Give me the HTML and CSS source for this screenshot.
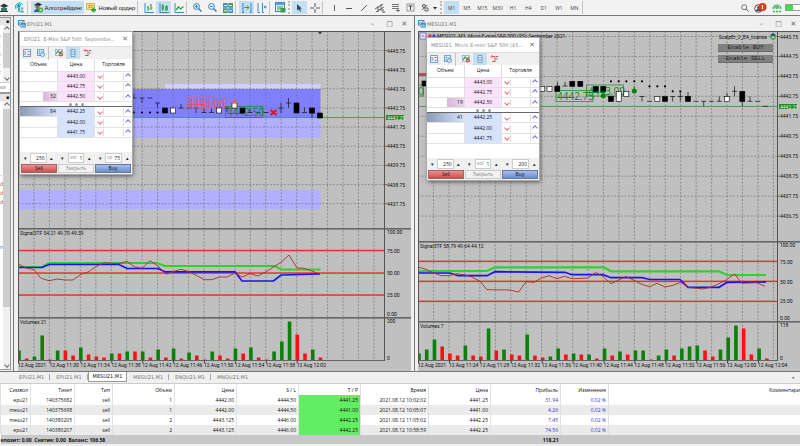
FILE: index.html
```html
<!DOCTYPE html>
<html lang="ru">
<head>
<meta charset="utf-8">
<title>Торговый терминал</title>
<link rel="stylesheet" href="styles.css">
</head>
<body>
<svg class="defs" aria-hidden="true">
  <symbol id="i-doc" viewBox="0 0 8 8"><rect x=".5" y=".5" width="5.5" height="4.5" fill="#fff" stroke="#3390dd"/><rect x="2.5" y="3" width="5.5" height="4.5" fill="#2f93e0"/><path d="M1 4l1.500-2 1.500 1 1.500-2" stroke="#e08030" fill="none"/><path d="M3.500 6.500V5M5.200 6.500V4.500M6.800 6.500V5" stroke="#fff" stroke-width=".8"/></symbol>
  <symbol id="i-depth" viewBox="0 0 8 8"><rect x=".5" y=".5" width="7" height="7" fill="#f4faff" stroke="#69a8dc"/><path d="M1.500 4h2M4.500 2.500h2M4.500 5.500h2" stroke="#e04848" stroke-width="1"/><path d="M1.500 2.500h1M1.500 5.500h1" stroke="#3380cc"/></symbol>
  <symbol id="i-clock" viewBox="0 0 8 8"><rect x=".5" y=".5" width="6" height="6" fill="#eaf4ff" stroke="#69a8dc"/><path d="M.5 2.500h6M2.500.5v6M.5 4.500h3" stroke="#69a8dc" stroke-width=".6"/><circle cx="5.500" cy="5.500" r="2" fill="#fff" stroke="#3380cc" stroke-width=".8"/><path d="M5.500 4.500v1h1" stroke="#3380cc" stroke-width=".6" fill="none"/></symbol>
  <symbol id="i-tick" viewBox="0 0 8 8"><rect x=".5" y=".5" width="7" height="6" fill="#eef7ff" stroke="#7db4e0" stroke-width=".8"/><path d="M1 5l2-3 2 2 2-2" stroke="#3a9a48" stroke-width="1.200" fill="none"/><circle cx="5.800" cy="5.600" r="2" fill="#e04040"/><path d="M4.800 5.600h2" stroke="#fff" stroke-width=".7"/></symbol>
  <symbol id="i-stack" viewBox="0 0 8 8"><path d="M2 .5h4v7H2zM2 2.800h4M2 5.200h4" fill="#e4f1fc" stroke="#5a8fc0" stroke-width=".8"/></symbol>
  <symbol id="i-spread" viewBox="0 0 8 8"><path d="M1.500 1.500H5M5 1.500v5.500M2 6.500h3" stroke="#e04848" stroke-width=".9" fill="none"/><path d="M2.500 0L1 1.500 2.500 3" stroke="#e04848" stroke-width=".8" fill="none"/><path d="M6 1.500h2" stroke="#e04848"/><path d="M6 4h1.500" stroke="#3380cc"/></symbol>
</svg>

<header class="toolbar">
  <button class="tb first" aria-label="Обучение"><svg width="9" height="10" viewBox="0 0 9 10"><path d="M0 3l4-2.500L8.500 3 4 5z" fill="#2d3a3a"/><path d="M1 5h6v3H1z" fill="#417a70"/><path d="M0 8.500h8" stroke="#2d3a3a"/></svg></button>
  <button class="tb" aria-label="Сигналы"><svg width="11" height="11" viewBox="0 0 11 11"><path d="M2 7a4 4 0 1 1 7-4M3.500 6A2.200 2.200 0 1 1 7 3" fill="none" stroke="#2aa3c0"/><circle cx="5" cy="4" r="1.300" fill="#2b87c8"/><path d="M4 10l1-5 1 5" fill="none" stroke="#2aa3c0"/><circle cx="8" cy="6.500" r="1.300" fill="#55b8d0"/><path d="M6 10.500c0-3 4-3 4 0z" fill="#55b8d0"/></svg></button>
  <span class="sep"></span>
  <button class="tb wide on"><svg width="10" height="11" viewBox="0 0 10 11"><path d="M1 3l4-2.500L9 2.500 5 5z" fill="#26333a"/><circle cx="4.500" cy="5" r="2" fill="#8a6b42"/><path d="M1 10c0-4 7-4 7 0z" fill="#2c5f87"/><circle cx="7.500" cy="8" r="2.500" fill="#38a940"/><path d="M6.800 6.800v2.400L9 8z" fill="#fff"/></svg>Алготрейдинг</button>
  <button class="tb wide"><svg width="11" height="10" viewBox="0 0 11 10"><path d="M.5.5h8v6h-8z" fill="#f6dc83" stroke="#caa63e" stroke-width=".8"/><path d="M2 2.500h5M2 4.300h4" stroke="#b08c2c" stroke-width=".7"/><path d="M7.500 4.500v5M5 7h5" stroke="#2da738" stroke-width="2"/></svg>Новый ордер</button>
  <span class="sep"></span>
  <button class="tb" aria-label="Бары"><svg width="10" height="10" viewBox="0 0 10 10"><path d="M1 0v9.500h9" fill="none" stroke="#3a86cc"/><path d="M4 3v5M4 4H3M4 6h1.500M7 1v6M7 2H6M7 5h1.500" stroke="#2b9e35" fill="none"/></svg></button>
  <button class="tb on" aria-label="Свечи"><svg width="10" height="10" viewBox="0 0 10 10"><path d="M1 0v9.500h9" fill="none" stroke="#3a86cc"/><path d="M3 2.500h1.500v4H3zM6.500 3.500h2v3.500h-2zM3.700 1v7M7.500 2v6" stroke="#2b9e35" fill="#dff5df" stroke-width=".8"/></svg></button>
  <button class="tb" aria-label="Линия"><svg width="10" height="10" viewBox="0 0 10 10"><path d="M1 0v9.500h9" fill="none" stroke="#3a86cc"/><path d="M2 7l2.500-3L6.500 6 9.500 3.500" stroke="#2b9e35" fill="none" stroke-width="1.200"/></svg></button>
  <span class="sep"></span>
  <button class="tb" aria-label="Увеличить"><svg width="9" height="9" viewBox="0 0 9 9"><circle cx="3.500" cy="3.500" r="2.900" fill="#e6f3ff" stroke="#2f82cc"/><path d="M5.700 5.700L8.500 8.500" stroke="#2f82cc" stroke-width="1.500"/><path d="M2 3.500h3M3.500 2v3" stroke="#2f82cc" stroke-width=".9"/></svg></button>
  <button class="tb" aria-label="Уменьшить"><svg width="9" height="9" viewBox="0 0 9 9"><circle cx="3.500" cy="3.500" r="2.900" fill="#e6f3ff" stroke="#2f82cc"/><path d="M5.700 5.700L8.500 8.500" stroke="#2f82cc" stroke-width="1.500"/><path d="M2 3.500h3" stroke="#2f82cc" stroke-width=".9"/></svg></button>
  <button class="tb" aria-label="Сетка окон"><svg width="10" height="10" viewBox="0 0 10 10"><path d="M0 0h4.700v4.700H0zM5.300 5.300H10V10H5.300z" fill="#3c8fd6"/><path d="M5.300 0H10v4.700H5.300zM0 5.300h4.700V10H0z" fill="#4a9f58"/><path d="M1 2.500h3M6.300 2.500h2.800M1 7.700h3M6.300 7.700h2.800" stroke="#e8f4ff"/></svg></button>
  <span class="sep"></span>
  <button class="tb on" aria-label="Автопрокрутка"><svg width="10" height="10" viewBox="0 0 10 10"><path d="M1 0v10M0 9.500h2M9 0v10M8 9.500h1" stroke="#3a86cc"/><path d="M2.500 4.500h4M5 2.500l2 2-2 2" stroke="#2b9e35" fill="none"/></svg></button>
  <button class="tb" aria-label="Сдвиг графика"><svg width="10" height="10" viewBox="0 0 10 10"><path d="M1 0v9.500h2M5.500 0v9.500H7" stroke="#3a86cc" fill="none"/><path d="M10 4H7M8.500 2.500L7 4l1.500 1.500" stroke="#3a86cc" fill="none"/></svg></button>
  <span class="sep"></span>
  <button class="tb" aria-label="Шаблоны"><svg width="11" height="11" viewBox="0 0 11 11"><rect x=".5" y=".5" width="9" height="9" fill="#eaf5ff" stroke="#3a86cc"/><path d="M1 2h8" stroke="#3a86cc" stroke-width="1.500"/><path d="M3 3.500v5M5 4v4M7 3.500v5" stroke="#2b9e35"/><rect x="5.500" y="6" width="5" height="4.500" fill="#3b9f52"/></svg></button>
  <span class="sep grip"></span>
  <button class="tb on" aria-label="Курсор"><svg width="7" height="8" viewBox="0 0 7 8"><path d="M1 0v6.500l1.700-1.300L4 7.800l1-.6L4 4.800h2z" fill="#2b4b66"/></svg></button>
  <button class="tb" aria-label="Перекрестие"><svg width="10" height="10" viewBox="0 0 10 10"><path d="M5 0v4M5 6v4M0 5h4M6 5h4" stroke="#555"/></svg></button>
  <span class="sep"></span>
  <div class="draw">
    <button class="tb" aria-label="Вертикальная линия"><svg width="8" height="8" viewBox="0 0 8 8"><path d="M4.500 1v6" stroke="#666"/></svg></button>
    <button class="tb" aria-label="Горизонтальная линия"><svg width="8" height="8" viewBox="0 0 8 8"><path d="M1 4.500h6" stroke="#555"/></svg></button>
    <button class="tb" aria-label="Трендовая линия"><svg width="8" height="8" viewBox="0 0 8 8"><path d="M1 7l6-6" stroke="#666"/></svg></button>
    <button class="tb" aria-label="Канал"><svg width="10" height="10" viewBox="0 0 10 10"><path d="M0 6l8-5M1 9l8-5M3 3v6M6 1v7" stroke="#555" stroke-width=".9"/><path d="M7 9h3M7 7h2" stroke="#555"/></svg></button>
    <button class="tb" aria-label="Фибоначчи"><svg width="9" height="9" viewBox="0 0 9 9"><path d="M1 1.500h7M1 3.500h7M1 5.500h7M5 7.500h4M7 6v3" stroke="#666" stroke-width=".9"/></svg></button>
    <button class="tb" aria-label="Текст"><svg width="9" height="9" viewBox="0 0 9 9"><rect x="1" y="1" width="7" height="7" fill="none" stroke="#777" stroke-width=".7"/><path d="M2.500 3h4M4.500 3v4" stroke="#444"/></svg></button>
  </div>
  <button class="tb shapes" aria-label="Фигуры"><svg width="17" height="9" viewBox="0 0 17 9"><circle cx="3" cy="3" r="1.500" fill="none" stroke="#555"/><path d="M1 7l5-5M4 5h3v3H4z" fill="none" stroke="#555" stroke-width=".9"/><path d="M12 4h4l-2 2.500z" fill="#222"/></svg></button>
  <span class="sep grip"></span>
  <div class="frames">
    <button class="tb on">M1</button><button class="tb">M5</button><button class="tb">M15</button><button class="tb">M30</button><button class="tb">H1</button><button class="tb">H4</button><button class="tb">D1</button><button class="tb">W1</button><button class="tb">MN</button>
  </div>
  <span class="sep"></span>
  <div class="tray">
    <button class="tb" aria-label="Поиск"><svg width="8" height="8" viewBox="0 0 8 8"><circle cx="3.200" cy="3.200" r="2.500" fill="none" stroke="#555" stroke-width=".8"/><path d="M5 5l2.500 2.500" stroke="#555"/></svg></button>
    <button class="tb" aria-label="Уведомления: 1"><svg width="13" height="10" viewBox="0 0 13 10"><circle cx="4.500" cy="5.500" r="3.800" fill="#fff" stroke="#444"/><circle cx="4.500" cy="4.500" r="1.500" fill="#444"/><path d="M2 8c1-3 4-3 5 0z" fill="#444"/><circle cx="8.500" cy="4" r="4" fill="#e23a22"/><path d="M8.500 2v4" stroke="#fff"/></svg></button>
    <button class="tb" aria-label="Уровень связи"><svg width="10" height="10" viewBox="0 0 10 10"><path d="M1 6a4 4 0 1 1 8 0M3 5.500a2 2 0 1 1 4 0" fill="none" stroke="#35b54a" stroke-width="1.200"/><circle cx="5" cy="5" r="1" fill="#35b54a"/><path d="M1 8.500h8" stroke="#35b54a" stroke-width="1.500" stroke-dasharray="2 1"/></svg></button>
    <svg width="15" height="7" viewBox="0 0 15 7" aria-hidden="true"><path d="M15 .5H.5v6H15" fill="#fff" stroke="#999"/><path d="M1 1h7v5H1z" fill="#43dc4a"/></svg>
  </div>
</header>

<main class="work">
  <aside class="dock" aria-label="Панели">
    <div class="pane watch">
      <div class="cap">■</div>
      <div class="list"><span class="cut"><i class="b">:</i><i class="b">.</i><i class="r">:</i><i class="r">.</i><i class="b">:</i></span><div class="bar"><b class="chev up"></b><span class="thumb"></span><b class="chev down"></b></div></div>
      <div class="foot">ки</div>
    </div>
    <div class="pane nav">
      <div class="cap">■</div>
      <div class="list"><span class="cut low"><i class="b">-</i><i class="r">di</i><i class="r">di</i><i class="r">di</i><i></i><i></i><i></i><i></i><i class="b">n</i></span><div class="bar"><b class="chev up"></b><span class="thumb"></span><b class="chev down"></b></div></div>
    </div>
  </aside>

  <section class="win w1">
    <div class="title"><svg width="8" height="8"><use href="#i-doc"/></svg><span>EPU21,M1</span><span class="ctl"><button aria-label="Свернуть">–</button><button aria-label="Развернуть">□</button><button aria-label="Закрыть окно">✕</button></span></div>
    <div class="client">
      <svg class="chart" id="chart1" role="img" aria-label="График EPU21,M1"></svg>
      <form class="pop p1">
        <div class="ptitle"><span>EPU21, E-Mini S&amp;P 500: Septembe...</span><button type="button" aria-label="Закрыть панель">✕</button></div>
        <div class="ptools"><button type="button" aria-label="Стакан"><svg width="8" height="8"><use href="#i-depth"/></svg></button><button type="button" aria-label="Время"><svg width="8" height="8"><use href="#i-clock"/></svg></button><span class="sep"></span><button type="button" aria-label="Тики"><svg width="8" height="8"><use href="#i-tick"/></svg></button><button type="button" class="on" aria-label="Уровни"><svg width="8" height="8"><use href="#i-stack"/></svg></button><button type="button" aria-label="Спред"><svg width="8" height="8"><use href="#i-spread"/></svg></button></div>
        <table class="ladder">
          <thead><tr><th>Объем</th><th>Цена</th><th>Торговля</th></tr></thead>
          <tbody>
            <tr class="ask"><td></td><td>4443.00</td><td><span class="tr"><button type="button" class="chev down" aria-label="Продать 4443.00"></button><button type="button" class="chev up" aria-label="Купить 4443.00"></button></span></td></tr>
            <tr class="ask"><td></td><td>4442.75</td><td><span class="tr"><button type="button" class="chev down" aria-label="Продать 4442.75"></button><button type="button" class="chev up" aria-label="Купить 4442.75"></button></span></td></tr>
            <tr class="ask"><td class="v3">32</td><td>4442.50</td><td><span class="tr"><button type="button" class="chev down" aria-label="Продать 4442.50"></button><button type="button" class="chev up" aria-label="Купить 4442.50"></button></span></td></tr>
            <tr class="mid"><td colspan="3"><span class="dots"><i></i><i></i><i></i></span></td></tr>
            <tr class="bid"><td class="full">84</td><td>4442.25</td><td><span class="tr"><button type="button" class="chev down" aria-label="Продать 4442.25"></button><button type="button" class="chev up" aria-label="Купить 4442.25"></button></span></td></tr>
            <tr class="bid"><td></td><td>4442.00</td><td><span class="tr"><button type="button" class="chev down" aria-label="Продать 4442.00"></button><button type="button" class="chev up" aria-label="Купить 4442.00"></button></span></td></tr>
            <tr class="bid"><td></td><td>4441.75</td><td><span class="tr"><button type="button" class="chev down" aria-label="Продать 4441.75"></button><button type="button" class="chev up" aria-label="Купить 4441.75"></button></span></td></tr>
          </tbody>
        </table>
        <div class="spins">
          <div class="spin"><button type="button">▾</button><label><input value="250" aria-label="sl"></label><button type="button">▴</button></div>
          <div class="spin"><button type="button">▾</button><label>vol<input value="1"></label><button type="button">▴</button></div>
          <div class="spin"><button type="button">▾</button><label>tp<input value="75"></label><button type="button">▴</button></div>
        </div>
        <div class="acts"><button type="button" class="sell">Sell</button><button type="button" class="close" disabled>Закрыть</button><button type="button" class="buy">Buy</button></div>
      </form>
    </div>
  </section>

  <section class="win w2">
    <div class="title"><svg width="8" height="8"><use href="#i-doc"/></svg><span>MESU21,M1</span><span class="ctl"><button aria-label="Свернуть">–</button><button aria-label="Развернуть">□</button><button aria-label="Закрыть окно">✕</button></span></div>
    <div class="client">
      <svg class="chart" id="chart2" role="img" aria-label="График MESU21,M1"></svg>
      <div class="expert"><button>Enable BUY</button><button>Enable SELL</button></div>
      <form class="pop p2">
        <div class="ptitle"><span>MESU21, Micro E-mini S&amp;P 500 ($5...</span><button type="button" aria-label="Закрыть панель">✕</button></div>
        <div class="ptools"><button type="button" aria-label="Стакан"><svg width="8" height="8"><use href="#i-depth"/></svg></button><button type="button" aria-label="Время"><svg width="8" height="8"><use href="#i-clock"/></svg></button><span class="sep"></span><button type="button" aria-label="Тики"><svg width="8" height="8"><use href="#i-tick"/></svg></button><button type="button" class="on" aria-label="Уровни"><svg width="8" height="8"><use href="#i-stack"/></svg></button><button type="button" aria-label="Спред"><svg width="8" height="8"><use href="#i-spread"/></svg></button></div>
        <table class="ladder">
          <thead><tr><th>Объем</th><th>Цена</th><th>Торговля</th></tr></thead>
          <tbody>
            <tr class="ask"><td></td><td>4443.00</td><td><span class="tr"><button type="button" class="chev down" aria-label="Продать 4443.00"></button><button type="button" class="chev up" aria-label="Купить 4443.00"></button></span></td></tr>
            <tr class="ask"><td></td><td>4442.75</td><td><span class="tr"><button type="button" class="chev down" aria-label="Продать 4442.75"></button><button type="button" class="chev up" aria-label="Купить 4442.75"></button></span></td></tr>
            <tr class="ask"><td class="v4">19</td><td>4442.50</td><td><span class="tr"><button type="button" class="chev down" aria-label="Продать 4442.50"></button><button type="button" class="chev up" aria-label="Купить 4442.50"></button></span></td></tr>
            <tr class="mid"><td colspan="3"><span class="dots"><i></i><i></i><i></i></span></td></tr>
            <tr class="bid"><td class="full">41</td><td>4442.25</td><td><span class="tr"><button type="button" class="chev down" aria-label="Продать 4442.25"></button><button type="button" class="chev up" aria-label="Купить 4442.25"></button></span></td></tr>
            <tr class="bid"><td></td><td>4442.00</td><td><span class="tr"><button type="button" class="chev down" aria-label="Продать 4442.00"></button><button type="button" class="chev up" aria-label="Купить 4442.00"></button></span></td></tr>
            <tr class="bid"><td></td><td>4441.75</td><td><span class="tr"><button type="button" class="chev down" aria-label="Продать 4441.75"></button><button type="button" class="chev up" aria-label="Купить 4441.75"></button></span></td></tr>
          </tbody>
        </table>
        <div class="spins">
          <div class="spin"><button type="button">▾</button><label><input value="250" aria-label="sl"></label><button type="button">▴</button></div>
          <div class="spin"><button type="button">▾</button><label>vol<input value="1"></label><button type="button">▴</button></div>
          <div class="spin"><button type="button">▾</button><label><input value="200" aria-label="tp"></label><button type="button">▴</button></div>
        </div>
        <div class="acts"><button type="button" class="sell">Sell</button><button type="button" class="close" disabled>Закрыть</button><button type="button" class="buy">Buy</button></div>
      </form>
    </div>
  </section>
</main>

<nav class="tabs">
  <button>EPU21,M1</button><button>EPU21,M1</button><button class="cur">MESU21,M1</button><button>MESU21,M1</button><button>ENQU21,M1</button><button>MNQU21,M1</button>
  <button class="more" aria-label="Назад">◂</button>
</nav>

<table class="trades">
  <colgroup><col class="c1"><col class="c2"><col class="c3"><col class="c4"><col class="c4"><col class="c4"><col class="c4"><col class="c5"><col class="c4"><col class="c6"><col class="c7"><col></colgroup>
  <thead><tr><th>Символ</th><th>Тикет</th><th>Тип</th><th>Объем</th><th>Цена</th><th>S / L</th><th>T / P</th><th>Время</th><th>Цена</th><th>Прибыль</th><th>Изменение</th><th>Комментари</th></tr></thead>
  <tbody>
    <tr><td>epu21</td><td>140375682</td><td>sell</td><td>1</td><td>4442.00</td><td>4444.50</td><td class="tp">4441.25</td><td>2021.08.12 10:02:02</td><td>4441.25</td><td class="pl">31.94</td><td class="pl">0.02 %</td><td></td></tr>
    <tr><td>mesu21</td><td>140375698</td><td>sell</td><td>1</td><td>4442.00</td><td>4444.50</td><td class="tp">4441.00</td><td>2021.08.12 10:05:07</td><td>4441.00</td><td class="pl">4.26</td><td class="pl">0.02 %</td><td></td></tr>
    <tr><td>mesu21</td><td>140380205</td><td>sell</td><td>2</td><td>4443.125</td><td>4446.00</td><td class="tp">4442.25</td><td>2021.08.12 11:05:02</td><td>4442.25</td><td class="pl">7.45</td><td class="pl">0.02 %</td><td></td></tr>
    <tr><td>epu21</td><td>140380207</td><td>sell</td><td>2</td><td>4443.125</td><td>4446.00</td><td class="tp">4442.25</td><td>2021.08.12 10:58:59</td><td>4442.25</td><td class="pl">74.56</td><td class="pl">0.02 %</td><td></td></tr>
  </tbody>
  <tfoot><tr><td colspan="9">епозит: 0.00&nbsp; Снятие: 0.00&nbsp; Баланс: 106.58</td><td>118.21</td><td colspan="2"></td></tr></tfoot>
</table>
<script src="script.js"></script>
</body>
</html>
```
FILE: styles.css
```css
* { box-sizing: border-box; }
body {
  margin: 0;
  min-height: 100vh;
  display: flex;
  flex-direction: column;
  background: #f0f0f0;
  color: #111;
  font: 5px/8px "Open Sans", "Noto Sans", sans-serif;
  overflow-x: hidden;
}
button, input { font: inherit; color: inherit; border: 0; padding: 0; margin: 0; background: none; }
svg { display: block; flex: none; }
i { font-style: normal; }
.defs { position: absolute; width: 0; height: 0; }

.toolbar { display: flex; align-items: center; height: 16px; border-bottom: 1px solid #777; background: #f2f2f2; }
.tb { flex: none; width: 15px; height: 13px; display: flex; align-items: center; justify-content: center; color: #444; }
.tb.first { width: 12px; justify-content: flex-start; }
.tb.wide { width: 53px; gap: 2px; color: #111; font: 6px/8px "Liberation Sans", sans-serif; }
.on { background: #c4def2; }
.sep { flex: none; width: 4px; height: 13px; border-left: 1px solid #c4c4c4; }
.sep.grip { border-left: 2px dotted #bbb; }
.draw { display: flex; flex: none; width: 92px; justify-content: space-between; }
.shapes { width: 22px; }
.frames { display: flex; flex: none; width: 138px; }
.frames .tb { flex: 1; width: auto; }
.tray { display: flex; margin-left: auto; align-items: center; gap: 1px; }

/* Arrow drawn from two sides of a rotated square */
.chev { display: flex; align-items: center; justify-content: center; }
.chev::before { content: ""; width: 3px; height: 3px; border: solid currentColor; border-width: 1px 0 0 1px; transform: rotate(45deg); opacity: .75; }
.chev.down::before { transform: rotate(225deg); }

.work { display: flex; flex: none; height: 356px; background: #f0f0f0; border-bottom: 1px solid #777; }
.dock { flex: none; width: 13px; display: flex; flex-direction: column; border-top: 1px solid #ddd; padding-right: 2px; }
.pane { display: flex; flex-direction: column; background: #fff; border: 1px solid #999; border-left: 0; }
.watch { flex: none; height: 76px; }
.nav { flex: 1; margin-bottom: 1px; }
.cap { background: #e4e4e4; text-align: right; padding-right: 1px; line-height: 6px; height: 7px; }
.list { display: flex; flex: 1; overflow: hidden; }
.cut { width: 3px; overflow: hidden; display: flex; flex-direction: column; justify-content: center; gap: 1px; }
.cut i { height: 8px; }
.cut.low { justify-content: flex-start; padding-top: 70px; }
.b { color: #2878a8; }
.r { color: #b83838; }
.bar { flex: 1; display: flex; flex-direction: column; align-items: center; background: #f0f0f0; }
.bar b { height: 8px; color: #444; }
.bar .thumb { width: 100%; height: 35px; background: #cdcdcd; margin-bottom: auto; }
.nav .thumb { height: 198px; }
.foot { height: 10px; border-top: 1px solid #ccc; color: #777; overflow: hidden; }

.win { display: flex; flex-direction: column; min-width: 0; border-left: 1px solid #777; }
.w1 { flex: 393 1 0; padding: 0 3px 0 4px; }
.w2 { flex: 382 1 0; padding-left: 3px; }
.title { display: flex; align-items: center; gap: 1px; height: 15px; flex: none; color: #777; font-family: "DejaVu Sans", sans-serif; }
.ctl { margin-left: auto; display: flex; }
.ctl button { width: 17px; color: #666; font-size: 7px; }
.ctl button:last-child { width: 13px; }
.client { position: relative; flex: 1; background: #c0c0c0; }
.chart { width: 100%; height: 340px; overflow: hidden; }
.chart text { fill: #111; font: 5px Roboto, sans-serif; }
.chart .mark { font: 10px "Open Sans", sans-serif; }
.chart .red { fill: #fa4c40; }
.chart .green { fill: #0c861a; }
.chart .light { fill: #d8f0d8; }

.expert { position: absolute; right: 27px; top: 13px; display: flex; flex-direction: column; gap: 3px; }
.expert button { width: 55px; height: 8px; background: #808080; border-bottom: 1px solid #6a6a6a; color: #222; font: 6px/7px "Liberation Mono", monospace; }

.pop { position: absolute; width: 112px; background: #fff; box-shadow: 0 0 0 1px #aaa, 1px 2px 4px #555; }
.p1 { left: 2px; top: 1px; }
.p2 { left: 9px; top: 7px; }
.ptitle { display: flex; align-items: center; justify-content: space-between; height: 14px; padding: 0 4px; color: #888; white-space: nowrap; font-family: "DejaVu Sans", sans-serif; }
.ptitle button { font-size: 7px; color: #777; }
.ptools { display: flex; align-items: center; height: 13px; background: #f0f0f0; border-top: 1px solid #ddd; }
.ptools button { width: 14px; height: 12px; display: flex; align-items: center; justify-content: center; }
.ladder { width: 100%; height: 79px; border-collapse: collapse; table-layout: fixed; line-height: 7px; }
.ladder th { font-weight: 400; height: 12px; padding: 0; }
.ladder th + th { border-left: 1px solid #ddd; }
.ladder td { padding: 0 1px; border: 1px solid #e2e2e2; border-left: 0; text-align: right; }
.ladder td:last-child { border-right: 0; }
.ladder td:nth-child(2) { text-align: center; }
.ask td:nth-child(2) { background: #fde2fd; }
.bid td:nth-child(2) { background: #d5e3ff; }
.ladder .v3 { background: linear-gradient(90deg, #fff 62%, #d8b8d8 62%, #ecd6ec); }
.ladder .v4 { background: linear-gradient(90deg, #fff 55%, #d8b8d8 55%, #ecd6ec); }
.ladder .full { background: linear-gradient(90deg, #8d9ab4, #d5e3ff); }
.ladder .mid td { border-top: 1px solid #666; border-bottom: 1px solid #666; }
.dots { display: flex; justify-content: center; gap: 3px; }
.dots i { width: 3px; height: 3px; border-radius: 50%; background: #999; }
.tr { display: flex; justify-content: space-between; }
.tr button { width: 8px; height: 7px; color: #e04040; border-right: 1px solid #ddd; }
.tr button + button { color: #4040d0; border-right: 0; border-left: 1px solid #ddd; }
.spins { display: flex; height: 25px; padding-top: 15px; gap: 1px; background: linear-gradient(#fff 14px, #f0f0f0 14px); }
.spin { flex: 1; min-width: 0; display: flex; }
.spin button { flex: none; width: 10px; color: #222; }
.spin label { flex: 1; min-width: 0; display: flex; background: #fff; border: 1px solid #ccc; color: #888; line-height: 7px; padding: 0 1px; }
.spin input { flex: 1; min-width: 0; width: 0; text-align: right; color: #222; }
.acts { display: flex; gap: 1px; height: 11px; padding: 1px; background: #f0f0f0; }
.acts button { flex: 1; border: 1px solid #aaa; line-height: 7px; }
.acts .sell { background: linear-gradient(#ee9292, #c85050); border-color: #a86060; }
.acts .close { background: #f2f2f2; color: #888; border-color: #ccc; }
.acts .buy { background: linear-gradient(#a8bff0, #6e8cc8); border-color: #6878a0; }

.tabs { display: flex; flex: none; height: 12px; padding-left: 13px; border-bottom: 1px solid #ccc; font-family: "DejaVu Sans", sans-serif; }
.tabs button { height: 10px; padding: 0 6px; color: #777; line-height: 9px; background: linear-gradient(#aaa, #aaa) right center / 1px 6px no-repeat; }
.tabs .cur { background: #fff; color: #111; border: 1px solid #999; border-top: 0; padding: 0 4px; }
.tabs button:nth-child(6) { background: none; }
.tabs .more { margin-left: auto; background: none; }

.trades { width: 100%; table-layout: fixed; border-collapse: collapse; background: #fff; white-space: nowrap; }
.c1 { width: 30px; } .c2 { width: 44px; } .c3 { width: 38px; } .c4 { width: 62px; } .c5 { width: 68px; } .c6 { width: 70px; } .c7 { width: 48px; }
.trades th, .trades td { height: 10px; padding: 0 2px; text-align: right; font-weight: 400; line-height: 8px; border-left: 1px solid #e2e2e2; }
.trades th { height: 11px; }
.trades th:last-child { padding: 0; }
.trades tbody tr:nth-child(even) { background: #ebebeb; }
.trades .tp { background: #62ee62; }
.trades .pl { color: #3434e0; }
.trades tfoot td { height: 9px; background: #c8c8c8; border: 0; font-weight: 700; }
.trades tfoot td:first-child { text-align: left; padding: 0; }
```
FILE: script.js
```js
const shapes = {
  // Small filled body, centred on x, y
  body: (x, y, fill, h = 5) => `<rect x="${x - 2.5}" y="${y - h / 2}" width="5" height="${h}" fill="${fill}" stroke="#000" stroke-width=".6"/>`,
  wick: (x, y, up, down) => `<path d="M${x - 2.5} ${y}h5M${x} ${y - up}V${y + down}" stroke="#222" stroke-width=".8"/>`,
  dot: (x, y) => `<circle cx="${x}" cy="${y}" r="1.100"/>`,
  text: (x, y, s, cls = '', anchor = 'start') => `<text x="${x}" y="${y}" class="${cls}" text-anchor="${anchor}">${s}</text>`,
  rect: (x, y, w, h, fill) => `<rect x="${x}" y="${y}" width="${w}" height="${h}" fill="${fill}"/>`,
  frame: (x, y, color) => `<rect x="${x}" y="${y}" width="37" height="11" fill="none" stroke="${color}" stroke-width=".7"/>`
};

function drawChart(id, c) {
  const { text, rect, body, wick, dot } = shapes;
  const [x0, y0, axis] = c.area;
  const o = [`<g transform="translate(${-x0} ${-y0})">`];
  c.zones.forEach(z => o.push(rect(...z)));
  let grid = '';
  for (let k = 0; k < 23; k++) {
    const x = c.gridX + k * 15.45;
    grid += `M${x} ${y0}V360`;
  }
  c.rows.forEach(y => { grid += `M${x0} ${y}H${axis}`; });
  o.push(`<path d="${grid}" stroke="#6b6b6b" stroke-width=".6" stroke-dasharray="2 1.500"/>`);
  c.rows.forEach((y, i) => o.push(`<path d="M${axis} ${y}h3" stroke="#444" stroke-width=".7"/>`, text(axis + 3, y + 2, (4445.75 - i).toFixed(2))));
  o.push(rect(x0, c.price - .5, axis - x0, 1, '#4f9c52'));
  c.dots.forEach(d => o.push(dot(...d)));
  c.wicks.forEach(w => o.push(wick(...w)));
  o.push(c.marks);
  c.bodies.forEach(b => o.push(body(...b)));
  o.push(c.over);
  c.levels.forEach(y => o.push(rect(x0, y - .7, axis - x0, 1.5, '#f03030')));
  const line = (pts, color, w) => o.push(`<polyline points="${pts}" fill="none" stroke="${color}" stroke-width="${w}"/>`);
  line(c.green, '#2fd02f', 2.2);
  line(c.blue, '#1414f0', 1.7);
  line(c.brown, '#b22a2a', .9);
  c.volumes.split(' ').forEach((v, i) => {
    const h = +v.slice(1);
    o.push(rect(x0 - .8 + i * 7.73, 360.5 - h, 3.6, h, v[0] === 'g' ? '#0a820a' : '#ff1010'));
  });
  o.push(rect(x0, c.split - 1, 400, 1.6, '#666'), rect(x0, c.split2 - 1, 400, 1.6, '#666'));
  o.push(rect(x0, 360, axis - x0, 1, '#666'), rect(axis, y0, 1, 330, '#555'), rect(x0, y0, 1, 330, '#555'), rect(x0, y0, 400, 1, '#555'));
  c.scale.forEach(([y, s]) => o.push(text(axis + 3, y + 2, s)));
  o.push(text(x0 + 2, c.split + 6, c.signal), text(x0 + 2, c.split2 + 6, c.volName));
  c.times.forEach((t, i) => {
    const x = i ? c.gridX + (2 * i - 1) * 15.45 : x0;
    o.push(text(x, 367, '12 Aug ' + t), rect(x, 360, 1, 3, '#444'));
  });
  o.push(rect(axis + 2, c.price - 2.5, 18, 5, '#228b22'), text(axis + 3, c.price + 2, '4442.25', 'light'), '</g>');
  document.getElementById(id).innerHTML = o.join('');
}

const range = (n, start, step) => Array.from({ length: n }, (_, i) => start + i * step);

drawChart('chart1', {
  area: [18, 31, 384], gridX: 34, rows: range(9, 50.5, 19.15), price: 117.5,
  zones: [[165, 84, 155.5, 5, '#d0d0fa'], [18, 89, 302.5, 28.5, '#8080ff'], [18, 117.5, 302.5, 20.5, '#b0b0ff'], [18, 190, 302.5, 19.5, '#b0b0ff']],
  dots: [[134, 112.5], [142, 112.5], [150, 112.5], [157.5, 112.5]],
  wicks: [[134, 98, 4, 0], [142, 98, 0, 5], [150, 98, 0, 0], [157.5, 103, 0, 5], [181, 108, 4, 0], [189, 108, 0, 0], [196, 108, 0, 5], [204, 112.5, 4, 0], [211.5, 112.5, 4, 0], [227, 108, 0, 4], [250, 112.5, 4, 0], [258, 112.5, 0, 0], [266, 112.5, 0, 0], [281, 108, 5, 5], [288.500, 103, 5, 5], [304.500, 112.500, 5, 0], [312, 113, 0, 5]],
  bodies: [[165, 110.5, '#000'], [173, 110.5, '#fff'], [219, 110.5, '#fff'], [234.500, 105.500, '#fff'], [242.500, 110.500, '#000'], [296.500, 108, '#000', 10], [312, 110.5, '#000'], [320, 115.5, '#000']],
  marks: shapes.frame(187, 97, '#f06058') + shapes.text(188, 107, '4443.00', 'mark red') + shapes.frame(225.5, 106.5, '#148a1c') + shapes.text(227, 116, '4442.50', 'mark green'),
  over: '<path d="M231 103l3.500-3.500 3.500 3.500z" fill="#f06040"/><path d="M270.500 110l6 5M276.500 110l-6 5" stroke="#f01010" stroke-width="2.200"/><path d="M317.500 31.500h5l-2.500 3z" fill="#444"/>',
  levels: [250.5, 273, 295],
  green: '18,267 42,267 49,263 157,263 165,266 275,266 281,269.5 320.500,269.5',
  blue: '18,267.5 42,267.5 49,264.5 119,264.5 127,268.5 158,268.5 165,271.8 235,271.8 242,281 273.5,281 281,275 320,274',
  brown: '18,264 27,268.3 34,269.7 41,278.3 49,280.7 57,279 65,280 73,280 81,274.3 88,272 96,266.7 104,262.7 119,263.7 127,261.3 134,266.7 142,268.3 150,260.7 158,266 166,274.3 173,271.7 181,269.3 189,271.7 197,275.7 204,279.7 212,279.7 219.5,277 227,277 235,273 242,277 250,273.7 258,276 266,271.7 281,262.3 289,255 297,268 304,268.3 312,271 320,274.3',
  volumes: 'g10 r2 g4 g25 r1 g10 r10 r5 g13 r6 r4 r3 g7 r7 g9 r9 g9 r3 g11 r3 g12 r2 g8 r5 r1 g9 r5 r2 g12 r7 g13 r3 r1 g9 g19 g39 r26 r7 g11 r3',
  split: 229, split2: 318, signal: 'Signal3TF 54.21 49.70 49.39', volName: 'Volumes 21',
  scale: [[231.5, '100.00'], [251, '75.00'], [273, '50.00'], [295, '25.00'], [314, '0.00'], [321, '200'], [358, '0']],
  times: ['2021', '11:30', '11:34', '11:38', '11:42', '11:46', '11:50', '11:54', '11:58', '12:02']
});

drawChart('chart2', {
  area: [418, 31, 777], gridX: 433.5, rows: range(10, 36.5, 19.95), price: 106.5,
  zones: [[418, 73, 12, 3, '#b05050']],
  dots: [[611, 81.3], [618.7, 81.3], [626.3, 81.3], [634.3, 81.3], [642, 81.3], [649.5, 86.3], [657.3, 86.3], [665, 86.3], [672.7, 91.3], [680.3, 91.3]],
  wicks: [[557.5, 86, 4, 0], [565, 86, 4, 0], [642, 96.5, 0, 5], [649.5, 101.3, 0, 0], [672.7, 96.5, 0, 5], [680.3, 96.5, 5, 5], [688, 97, 5, 0], [696, 101.3, 0, 0], [703.7, 101.3, 0, 5], [711.5, 101.3, 0, 0], [719.3, 101.3, 5, 0], [727, 97, 4, 0], [734.5, 91.3, 5, 5], [742.3, 101.3, 0, 5], [750, 101.3, 5, 0], [757.7, 101.3, 0, 0], [765.3, 106.3, 0, 0]],
  bodies: [[424.5, 83.5, '#000'], [542.3, 89, '#fff'], [549.5, 89, '#fff'], [557.3, 89, '#000'], [572.3, 83.8, '#000'], [580.3, 83.8, '#000'], [595.7, 89, '#000'], [603.3, 89, '#000'], [611, 99, '#000'], [618.7, 96.3, '#fff', 10], [626.3, 94, '#fff'], [657.3, 99, '#fff'], [665, 99, '#000'], [688, 99, '#000'], [727, 99, '#fff'], [742.3, 96.3, '#000', 10]],
  marks: shapes.frame(556, 90.5, '#148a1c') + shapes.text(557, 100, '4442.75', 'mark green') + shapes.frame(586.5, 85, '#148a1c') + shapes.text(588, 95, '4443.00', 'mark green') + shapes.frame(386.5, 85, '#148a1c') + shapes.text(418, 95, '0', 'mark green'),
  over: '<path d="M603.300 91v4M634.300 86v4" stroke="#0a820a"/><circle cx="603.300" cy="95.700" r="2.500" fill="#0a820a"/><circle cx="634.300" cy="91" r="2.500" fill="#0a820a"/><rect x="420" y="33" width="6" height="6" fill="#e8e8ff" stroke="#5858d0" stroke-width=".7"/><path d="M421.500 36h3" stroke="#e04040"/><circle cx="430" cy="36" r="1.700" fill="#d03050"/><circle cx="434" cy="36" r="1.700" fill="#3050d0"/>'
    + shapes.text(437, 38, 'MESU21, M1: Micro E-mini S&amp;P 500 ($5): September 2021') + shapes.text(767, 39, 'ScalpEr_2_EA_license', '', 'end')
    + '<circle cx="773" cy="37" r="2.800" fill="#38a940"/><path d="M770 35l3-2 3 2-3 1.500z" fill="#2c4f87"/><path d="M772.500 36v2.600l2-1.300z" fill="#fff"/>',
  levels: [261.3, 281.3, 301.3],
  green: '418,271 487,271 495,267.3 604,267.3 611,271.3 719,271.3 727,275 766,275',
  blue: '418,273 450,273 458,275.7 487,275.7 495,271.7 565,272.3 572,274.7 603,274.7 611,277.7 642,277.7 650,279.5 680,279.5 688,287.3 719,287.3 727,282.3 766,282',
  brown: '418,267 426,269.3 433,272.7 441,275.7 449,275.7 457,273.7 465,275 472,277 480,281.3 487,289.7 510,290 518.7,292 526,281.7 534,282.3 541.5,278 549,275.7 557,278.7 564.5,276.3 572,278.7 588,278 595.5,272.3 603,276.5 611,283.7 626,276.5 634,280.3 641,284 649.5,286.7 657,283.3 665,287 673,285.3 681,282.3 688,287.3 703,289 711,287 719,283.7 726,280 734.5,274 742,283.3 757,282.7 765,286.3',
  volumes: 'g7 g11 g21 r14 r7 r5 g15 r5 r4 g32 r10 g11 r6 r5 g26 r5 r3 g4 g12 r6 g7 r6 g6 r2 g12 r5 g9 r6 g10 g10 r1 g5 g11 r5 g12 g14 g15 r10 r4 g11 g23 g35 r32 r6 g12 r2',
  split: 242, split2: 322, signal: 'Signal3TF 58.79 49.64 44.12', volName: 'Volumes 7',
  scale: [[244.5, '100.00'], [261.5, '75.00'], [281.5, '50.00'], [301.3, '25.00'], [318, '0.00'], [325, '118'], [358, '0']],
  times: ['2021', '11:24', '11:28', '11:32', '11:36', '11:40', '11:44', '11:48', '11:52', '11:56', '12:00', '12:04']
});
```
